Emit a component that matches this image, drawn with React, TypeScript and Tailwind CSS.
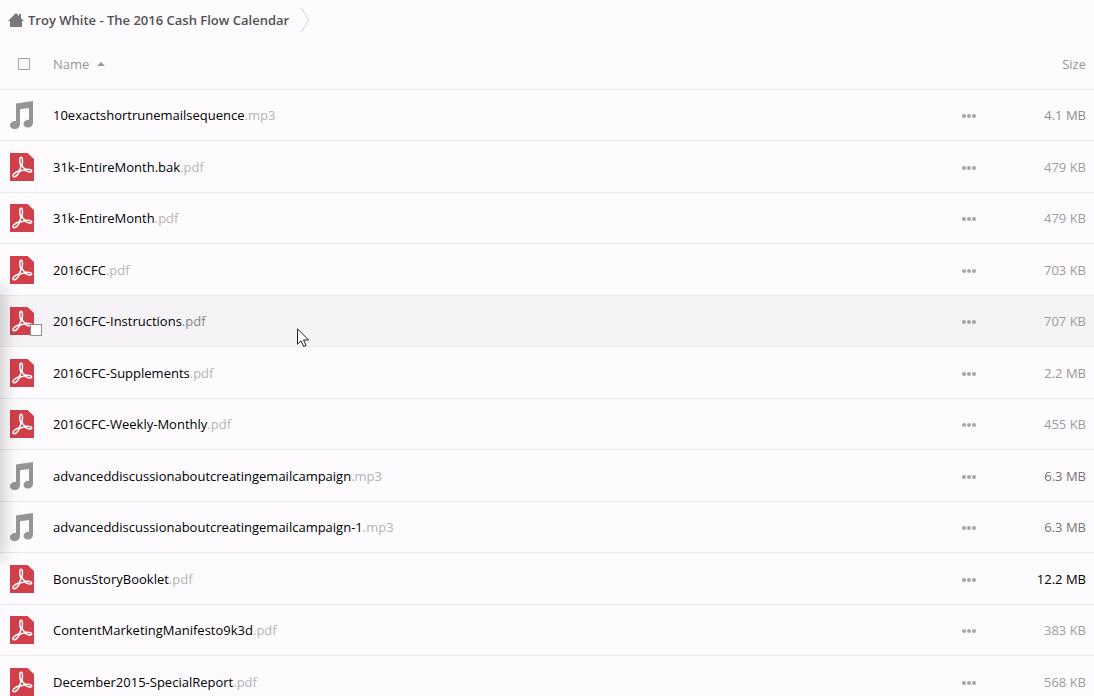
import { type JSX } from "react"

type FileRow = {
  name: string
  ext: "pdf" | "mp3"
  size: string
  sizeClass: string
  hovered?: boolean
}

const files: FileRow[] = [
  { name: "10exactshortrunemailsequence", ext: "mp3", size: "4.1 MB", sizeClass: "text-[#8e8c8f]" },
  { name: "31k-EntireMonth.bak", ext: "pdf", size: "479 KB", sizeClass: "text-[#9e9ca0]" },
  { name: "31k-EntireMonth", ext: "pdf", size: "479 KB", sizeClass: "text-[#9e9ca0]" },
  { name: "2016CFC", ext: "pdf", size: "703 KB", sizeClass: "text-[#9e9ca0]" },
  { name: "2016CFC-Instructions", ext: "pdf", size: "707 KB", sizeClass: "text-[#9e9ca0]", hovered: true },
  { name: "2016CFC-Supplements", ext: "pdf", size: "2.2 MB", sizeClass: "text-[#9a989c]" },
  { name: "2016CFC-Weekly-Monthly", ext: "pdf", size: "455 KB", sizeClass: "text-[#9e9ca0]" },
  { name: "advanceddiscussionaboutcreatingemailcampaign", ext: "mp3", size: "6.3 MB", sizeClass: "text-[#757376]" },
  { name: "advanceddiscussionaboutcreatingemailcampaign-1", ext: "mp3", size: "6.3 MB", sizeClass: "text-[#757376]" },
  { name: "BonusStoryBooklet", ext: "pdf", size: "12.2 MB", sizeClass: "text-black" },
  { name: "ContentMarketingManifesto9k3d", ext: "pdf", size: "383 KB", sizeClass: "text-[#a19fa3]" },
  { name: "December2015-SpecialReport", ext: "pdf", size: "568 KB", sizeClass: "text-[#9e9ca0]" },
]

function PdfIcon(): JSX.Element {
  return (
    <svg width="24" height="28" viewBox="0 0 24 28" aria-hidden="true">
      <path d="M0 0h17.5L24 6v22H0z" fill="#d03f4a" />
      <g fill="none" stroke="#fff" strokeWidth="1.5" strokeLinejoin="round">
        <path d="M10.9 13.2C9.6 9.8 9.1 4.3 11.1 4.3c2 0 1.4 5.5.8 8.5" />
        <path d="M10.2 17.3c-1.5 3.6-4.6 7.2-6.7 6.3-2-1.2 1.4-4.3 5-5.6" />
        <path d="M14 16.5c3.9-.5 7.7-.1 7.7 1.5 0 1.9-4.2.9-7-1.2" />
        <path d="M11.5 12c-.6 2.5-1.6 4.7-2.7 6.4 2-.8 4.3-1.4 6.7-1.7-1.7-1.3-3-2.9-4-4.7z" />
      </g>
    </svg>
  )
}

function AudioIcon(): JSX.Element {
  return (
    <svg width="24" height="28" viewBox="0 0 24 28" aria-hidden="true" fill="#969498">
      <path d="M6 2.5 23 0v21.5c0 3-2.2 5-5.2 5-2.4 0-4.3-1.2-4.3-3.4 0-2.700 2.400-4.400 5.500-4.400V7l-9 1.300V23c0 3-2.300 5-5.300 5C2 28 0 26.700 0 24.500c0-2.800 2.700-4.800 6-4.500z" />
    </svg>
  )
}

function HomeIcon(): JSX.Element {
  return (
    <svg width="16" height="14" viewBox="0 0 16 14" aria-hidden="true" fill="#79777b">
      <path d="M8 0 0 8h2v6h12V8h2l-3-3V1h-2v2z" />
    </svg>
  )
}

function Row({ file }: { file: FileRow }): JSX.Element {
  const fullName = `${file.name}.${file.ext}`
  return (
    <tr
      className={`border-b border-[#ebe9ed] odd:h-[51px] even:h-[52px] even:[&>td]:pt-px ${file.hovered ? "bg-[#f5f3f6]" : ""}`}
    >
      <td className="w-[53px] p-0 pl-[10px]">
        <div className="relative w-6">
          {file.ext === "pdf" ? <PdfIcon /> : <AudioIcon />}
          {file.hovered && (
            <input
              type="checkbox"
              aria-label={`Select ${fullName}`}
              className="absolute -right-2 -bottom-px size-3 appearance-none border border-[#8f8d90] bg-white"
            />
          )}
        </div>
      </td>
      <td className="p-0">
        <a href="#" className="text-black">
          {file.name}
          <span className={file.hovered ? "text-[#858387]" : "text-[#b5b3b7]"}>.{file.ext}</span>
        </a>
      </td>
      <td className="w-8 p-0">
        <button type="button" aria-label={`Actions for ${fullName}`} className="block pt-[3px]">
          <svg width="14" height="4" viewBox="0 0 14 4" fill="#a5a3a7">
            <circle cx="2" cy="2" r="2" />
            <circle cx="7" cy="2" r="2" />
            <circle cx="12" cy="2" r="2" />
          </svg>
        </button>
      </td>
      <td className={`w-[100px] p-0 pr-2 text-right ${file.sizeClass}`}>{file.size}</td>
    </tr>
  )
}

export default function App(): JSX.Element {
  return (
    <main className="relative h-screen overflow-hidden bg-[#fdfbfe] font-['Open_Sans',sans-serif] text-[13px] leading-5">
      <nav aria-label="Breadcrumb" className="flex h-10 items-center pl-2">
        <a href="#" className="flex items-center gap-1 font-semibold text-[#525054]">
          <HomeIcon />
          Troy White - The 2016 Cash Flow Calendar
        </a>
        <svg width="8" height="24" viewBox="0 0 8 24" className="ml-3" fill="none" stroke="#d6d4d8" aria-hidden="true">
          <path d="M.5 0 7.5 12 .5 24" />
        </svg>
      </nav>

      <table className="w-full border-collapse">
        <thead>
          <tr className="h-[49px] border-b border-[#ebe9ed] text-[#98969a]">
            <th className="w-[53px] p-0 pl-[18px]">
              <input
                type="checkbox"
                aria-label="Select all"
                className="block size-3 appearance-none border border-[#a9a7ab]"
              />
            </th>
            <th className="p-0 text-left font-normal">
              <button type="button" className="flex items-center gap-2">
                Name
                <svg width="8" height="4" viewBox="0 0 8 4" fill="#98969a" aria-hidden="true">
                  <path d="M4 0 8 4H0z" />
                </svg>
              </button>
            </th>
            <th className="w-8 p-0" />
            <th className="w-[100px] p-0 pr-2 text-right font-normal">Size</th>
          </tr>
        </thead>
        <tbody>
          {files.map(file => (
            <Row key={file.name} file={file} />
          ))}
        </tbody>
      </table>

      {/* edge of the closed side panel */}
      <div className="pointer-events-none absolute top-[288px] -left-2 h-[270px] w-2 shadow-[0_0_18px_rgba(0,0,0,0.4)]" />

      {/* mouse pointer */}
      <svg
        width="13"
        height="20"
        viewBox="0 0 13 20"
        className="pointer-events-none absolute top-[328px] left-[297px]"
        fill="#fff"
        stroke="#222"
        aria-hidden="true"
      >
        <path d="M.5.8v15.400l3.600-3.400 2.600 5.700 2.400-1-2.500-5.500h5z" />
      </svg>
    </main>
  )
}
